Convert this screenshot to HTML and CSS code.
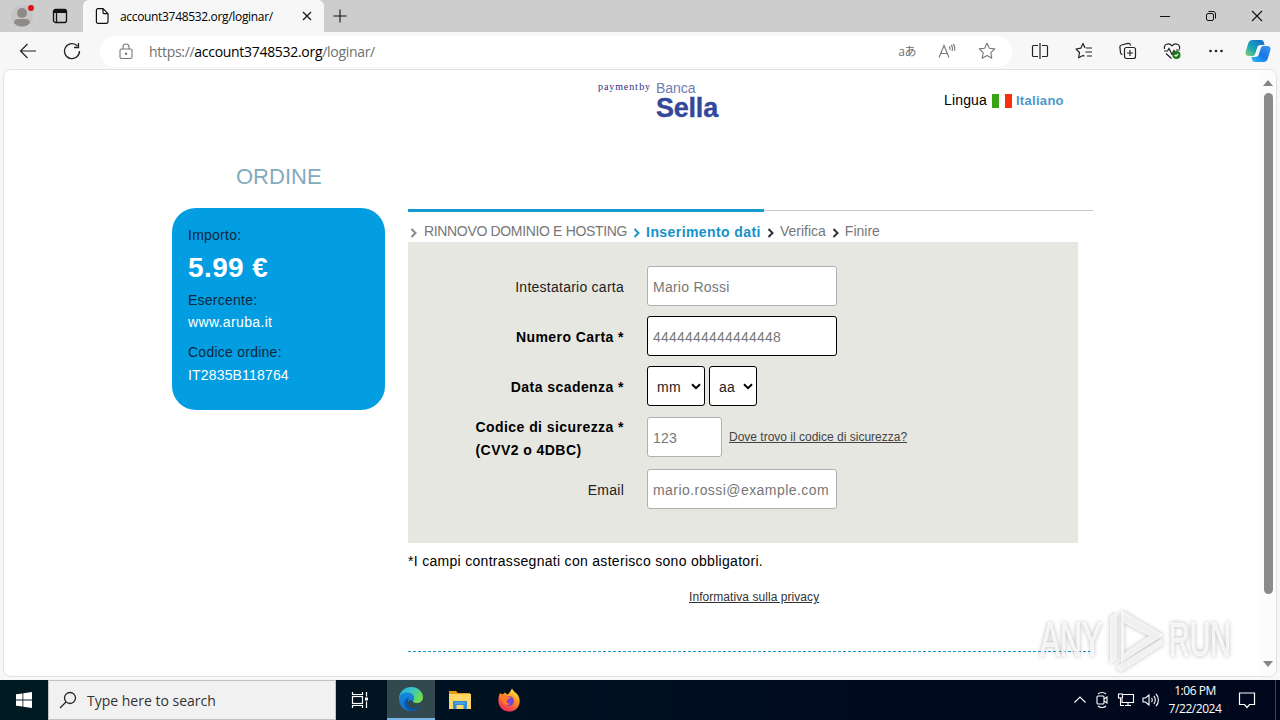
FILE: index.html
```html
<!DOCTYPE html>
<html lang="it">
<head>
    <meta charset="UTF-8">
    <meta name="viewport" content="width=device-width, initial-scale=1.0">
    <title>account3748532.org/loginar/</title>
    <link rel="stylesheet" href="styles.css">
</head>
<body>
    <div class="tabbar">
        <svg class="profile" width="28" height="32" viewBox="0 0 28 32">
            <circle cx="14" cy="16" r="11" fill="#c5c5c5"/>
            <circle cx="14" cy="13" r="5" fill="#8e8a88"/>
            <path d="M6 23c0-3 2-4 4-4h8c2 0 4 1 4 4-2 2.500-5 3.500-8 3.500s-6-1-8-3.500z" fill="#8e8a88"/>
            <circle cx="23" cy="8" r="3" fill="#e3101c"/>
        </svg>
        <svg class="workspaces" width="16" height="16" viewBox="0 0 16 16" fill="none" stroke="#111" stroke-width="1.300">
            <rect x="1.500" y="1.500" width="13" height="13" rx="2"/>
            <path d="M2 3.500h12" stroke-width="3"/>
            <path d="M4.500 4v10"/>
        </svg>
        <div class="tab">
            <svg width="14" height="16" viewBox="0 0 14 16" fill="none" stroke="#111" stroke-width="1.200">
                <path d="M3 .7h5l5 5v8c0 1-.6 1.600-1.600 1.600H3c-1 0-1.600-.6-1.600-1.600V2.300C1.400 1.300 2 .7 3 .7zM8 .7v3.700c0 .8.500 1.300 1.300 1.300H13"/>
            </svg>
            <span class="tab-title">account3748532.org/loginar/</span>
            <svg width="10" height="10" viewBox="0 0 10 10" stroke="#111" stroke-width="1.200"><path d="M1 1l8 8M9 1L1 9"/></svg>
        </div>
        <svg class="newtab" width="14" height="14" viewBox="0 0 14 14" stroke="#111" stroke-width="1.100"><path d="M7 .5v13M.5 7h13"/></svg>
        <div class="window-buttons">
            <svg width="12" height="12" viewBox="0 0 12 12" stroke="#111"><path d="M1 6.500h10"/></svg>
            <svg width="12" height="12" viewBox="0 0 12 12" fill="none" stroke="#111"><rect x="1.500" y="3.500" width="7" height="7" rx="1.500"/><path d="M3.500 1.500H8c1.600 0 2.500 1 2.500 2.500v4.500"/></svg>
            <svg width="12" height="12" viewBox="0 0 12 12" stroke="#111" stroke-width="1.100"><path d="M1 1l10 10M11 1L1 11"/></svg>
        </div>
    </div>

    <div class="toolbar">
        <svg class="back" width="18" height="16" viewBox="0 0 18 16" fill="none" stroke="#222" stroke-width="1.200"><path d="M8.500 1L1.500 8l7 7M1.500 8H17"/></svg>
        <svg class="reload" width="18" height="18" viewBox="0 0 18 18" fill="none" stroke="#222" stroke-width="1.300"><path d="M16.500 9A7.500 7.500 0 1 1 14.500 4M15.500 1v4.500H11"/></svg>
        <div class="address">
            <svg width="14" height="17" viewBox="0 0 14 17" fill="none" stroke="#777" stroke-width="1.100"><rect x="1" y="6" width="12" height="9.500" rx="1.500"/><path d="M4 6V4c0-4 6-4 6 0v2"/><circle cx="7" cy="10.700" r=".7" fill="#777"/></svg>
            <span class="url">https://<b>account3748532.org</b>/loginar/</span>
            <span class="translate">aあ</span>
            <svg class="read-aloud" width="18" height="16" viewBox="0 0 18 16" fill="none" stroke="#777" stroke-width="1.100"><path d="M1 14.500L6 2.500l5 12M3 10.500h6.500M11 3.500c1 1 1.200 2 .8 3.500M13 2c1.500 1.500 1.900 3.500 1 6M15 .8c1.800 2 2.200 4.500 1.300 7"/></svg>
            <svg class="star" width="18" height="18" viewBox="0 0 18 18" fill="none" stroke="#777" stroke-width="1.100" stroke-linejoin="round"><path d="M9 1.200l2.400 5 5.400.7-4 3.800 1 5.500L9 13.500l-4.800 2.700 1-5.500-4-3.800 5.400-.7z"/></svg>
        </div>
        <div class="tools">
            <svg width="18" height="18" viewBox="0 0 18 18" fill="none" stroke="#222" stroke-width="1.200"><path d="M7 3.500H2.500c-.6 0-1 .4-1 1v9c0 .6.400 1 1 1H7M11 3.500h4.500c.6 0 1 .4 1 1v9c0 .6-.4 1-1 1H11M9 1v16"/></svg>
            <svg width="18" height="18" viewBox="0 0 18 18" fill="none" stroke="#222" stroke-width="1.200" stroke-linejoin="round"><path d="M11 6H17M10.500 10H17M12 14h5M10 6L8 1.500 5.800 6.200 1 7l3.500 3.500-.9 5.300L8 13.500l1.500.8"/></svg>
            <svg width="18" height="18" viewBox="0 0 18 18" fill="none" stroke="#222" stroke-width="1.200"><rect x="5.500" y="5.500" width="11" height="11" rx="2"/><path d="M11 8v6M8 11h6M3.500 12.500c-1 0-1.800-.6-2-1.600L.9 5c-.1-1 .5-1.800 1.500-2L9 1.400c1-.2 2 .3 2.300 1.300l.3.900"/></svg>
            <svg width="18" height="18" viewBox="0 0 18 18" fill="none" stroke="#222" stroke-width="1.200"><path d="M1.500 7C.5 2 6 .5 9 3.800 12 .5 17.500 2 16.500 7M1 9h3.500L6 6.500l3 6 2-4 1 1.500M3 11.500l5.500 5M13 8h4"/><circle cx="13.500" cy="13" r="4" fill="#187a1c" stroke="none"/><path d="M11.800 13l1.200 1.200 2.200-2.400" stroke="#fff"/></svg>
            <svg width="18" height="18" viewBox="0 0 18 18" fill="#222"><circle cx="3.500" cy="9" r="1.300"/><circle cx="9" cy="9" r="1.300"/><circle cx="14.500" cy="9" r="1.300"/></svg>
        </div>
        <svg class="copilot" width="26" height="24" viewBox="0 0 26 24">
            <defs>
                <linearGradient id="cop1" x1="0" y1="1" x2="1" y2="0"><stop offset="0" stop-color="#8bd46a"/><stop offset=".4" stop-color="#17a7b4"/><stop offset="1" stop-color="#1467cf"/></linearGradient>
                <linearGradient id="cop2" x1="0" y1="1" x2="1" y2="0"><stop offset="0" stop-color="#25c3f2"/><stop offset=".5" stop-color="#1b74e8"/><stop offset="1" stop-color="#3c9bf0"/></linearGradient>
            </defs>
            <path d="M8 1h8c2 0 2.500 1 3 3l.6 2h-4c-2 0-3 1-3.500 3l-2 6c-.6 1.500-1.400 2-3 2H4c-3 0-4-2-3.300-4.500l2.500-8C4 2 5.500 1 8 1z" fill="url(#cop1)"/>
            <path d="M18 23h-8c-2 0-2.500-1-3-3l-.6-2h4c2 0 3-1 3.500-3l2-6c.6-1.500 1.400-2 3-2H22c3 0 4 2 3.300 4.500l-2.500 8C22 22 20.500 23 18 23z" fill="url(#cop2)"/>
        </svg>
    </div>

    <div class="page">
        <main>
            <header>
                <div class="logo">
                    <span class="payment">payment by</span>
                    <div class="bank">
                        <span class="bank-top">Banca</span>
                        <span class="bank-name">Sella</span>
                    </div>
                </div>
                <div class="language">
                    <span class="lingua">Lingua</span>
                    <span class="flag"></span>
                    <b>Italiano</b>
                </div>
            </header>

            <aside>
                <h2>ORDINE</h2>
                <div class="order">
                    <span class="label">Importo:</span>
                    <span class="amount">5.99 €</span>
                    <span class="label">Esercente:</span>
                    <span class="value">www.aruba.it</span>
                    <span class="label">Codice ordine:</span>
                    <span class="value order-id">IT2835B118764</span>
                </div>
            </aside>

            <section>
                <div class="progress"><div class="progress-done"></div></div>
                <div class="steps">
                    <svg class="arrow old" viewBox="0 0 8 10"><path d="M1.500 1L5.500 5l-4 4"/></svg>
                    <span class="step step-1">RINNOVO DOMINIO E HOSTING</span>
                    <svg class="arrow now" viewBox="0 0 8 10"><path d="M1.500 1L5.500 5l-4 4"/></svg>
                    <span class="step active">Inserimento dati</span>
                    <svg class="arrow" viewBox="0 0 8 10"><path d="M1.500 1L5.500 5l-4 4"/></svg>
                    <span class="step">Verifica</span>
                    <svg class="arrow" viewBox="0 0 8 10"><path d="M1.500 1L5.500 5l-4 4"/></svg>
                    <span class="step">Finire</span>
                </div>
                <div class="panel">
                    <div class="row">
                        <span class="name">Intestatario carta</span>
                        <div class="field">Mario Rossi</div>
                    </div>
                    <div class="row">
                        <span class="name required">Numero Carta *</span>
                        <div class="field dark digits">4444444444444448</div>
                    </div>
                    <div class="row">
                        <span class="name required">Data scadenza *</span>
                        <div class="field dark pick month">mm<svg viewBox="0 0 10 7"><path d="M1 1.200l4 4 4-4"/></svg></div>
                        <div class="field dark pick year">aa<svg viewBox="0 0 10 7"><path d="M1 1.200l4 4 4-4"/></svg></div>
                    </div>
                    <div class="row row-code">
                        <span class="name required code"><span>Codice di sicurezza *<br>(CVV2 o 4DBC)</span></span>
                        <div class="field short">123</div>
                        <u class="help">Dove trovo il codice di sicurezza?</u>
                    </div>
                    <div class="row">
                        <span class="name">Email</span>
                        <div class="field mail">mario.rossi@example.com</div>
                    </div>
                </div>
                <p class="note">*I campi contrassegnati con asterisco sono obbligatori.</p>
                <p class="privacy"><u>Informativa sulla privacy</u></p>
                <div class="divider"></div>
            </section>
        </main>
        <div class="scrollbar">
            <svg width="10" height="6" viewBox="0 0 10 6"><path d="M5 0l5 6H0z" fill="#858585"/></svg>
            <div class="thumb"></div>
            <svg width="10" height="6" viewBox="0 0 10 6"><path d="M0 0h10L5 6z" fill="#858585"/></svg>
        </div>
    </div>

    <svg class="watermark" width="230" height="74" viewBox="0 0 230 74">
        <g class="mark-text">
            <text x="8" y="52" textLength="62" lengthAdjust="spacingAndGlyphs">ANY</text>
            <text x="137" y="52" textLength="62" lengthAdjust="spacingAndGlyphs">RUN</text>
        </g>
        <g class="mark-play">
            <path d="M89 6l43 25-43 28zM92 19v30l25-17z"/>
            <path d="M78 12l7-3v46l-7 5z"/>
            <path d="M83 63l46-28 3 5-43 28z"/>
        </g>
    </svg>

    <div class="taskbar">
        <div class="start">
            <svg width="16" height="16" viewBox="0 0 16 16" fill="#fff"><path d="M0 2.300L6.500 1.400v6.200H0zM7.300 1.300L16 0v7.600H7.300zM0 8.400h6.500v6.200L0 13.700zM7.300 8.400H16V16l-8.700-1.300z"/></svg>
        </div>
        <div class="search">
            <svg width="18" height="18" viewBox="0 0 18 18" fill="none" stroke="#222" stroke-width="1.300"><circle cx="11" cy="7" r="5.500"/><path d="M7 11L1 17"/></svg>
            <span>Type here to search</span>
        </div>
        <div class="task">
            <svg width="18" height="18" viewBox="0 0 18 18" fill="none" stroke="#fff" stroke-width="1.200"><path d="M1.500 1v2.500h10V1M1.500 17v-2.500h10V17M15.500 1v4.500M15.500 10.500V17"/><rect x="1.500" y="5.500" width="10" height="7"/><path d="M14 8h3" stroke-width="3"/></svg>
        </div>
        <div class="task current">
            <svg width="26" height="26" viewBox="0 0 26 26">
                <defs>
                    <linearGradient id="edge1" x1="0" y1="0" x2="1" y2=".4"><stop offset="0" stop-color="#1ea8df"/><stop offset=".5" stop-color="#35c4cb"/><stop offset="1" stop-color="#6edb52"/></linearGradient>
                    <linearGradient id="edge2" x1="0" y1="0" x2="0" y2="1"><stop offset="0" stop-color="#1686d9"/><stop offset="1" stop-color="#1272c8"/></linearGradient>
                </defs>
                <path d="M1 13C1 6 6 1 13 1s12 5 12 10c0 4-3 6-6 6-3.500 0-5-1.500-3.500-3 1.500-2 0-5-4-5C7 9 4 11 1 13z" fill="url(#edge1)"/>
                <path d="M1 13c0-4 4-6.500 8-6.500 5 0 7.500 3 7 6-.2 1-1.300 1.500-1 2.500-3-2-6 0-5 3.500 1 3.500 5 5.500 10 4.500-2 1.500-4.500 2-7 2C6 25 1 20 1 13z" fill="url(#edge2)"/>
                <path d="M10 16c-.5 4 3 6.500 6.500 6.500 3 0 5.500-1.500 7-3.500-3 7-13.500 7.500-16.500 1.500-1.500-4 0-8 4-9-.7 1-1 3-1 4.500z" fill="#0d539f"/>
            </svg>
        </div>
        <div class="task">
            <svg width="24" height="22" viewBox="0 0 24 22">
                <path d="M1 2h7l2 2h12v4H1z" fill="#e79a13"/>
                <path d="M1 5h22v15H1z" fill="#ffd767"/>
                <path d="M5 12h14v8h-3.500v-4h-7v4H5z" fill="#2f8cd8"/>
                <path d="M7 14h10" stroke="#63b4ea" stroke-width="1"/>
            </svg>
        </div>
        <div class="task">
            <svg width="24" height="24" viewBox="0 0 24 24">
                <defs>
                    <linearGradient id="fox" x1=".8" y1="0" x2=".3" y2="1"><stop offset="0" stop-color="#fff04a"/><stop offset=".45" stop-color="#ff8d1e"/><stop offset="1" stop-color="#f02562"/></linearGradient>
                </defs>
                <path d="M3 5l2.500 1.500L8 4.500l2 2C12 6 13 4 15 .5c1.200 3 3.500 3.500 5.500 6 5 7 1 17-8.500 17C4 23.500-1.500 15.500 3 5z" fill="url(#fox)"/>
                <circle cx="12" cy="13" r="5" fill="#7a43d8"/>
                <path d="M4 8c3-1.500 5-1 7 .5l3 .5c-.5 1.800-3 1.500-4 3.500-1 1.800.5 3.500 3 3-3 4-9 0-9-7.500z" fill="#ff7a28"/>
            </svg>
        </div>
        <div class="tray">
            <svg width="14" height="14" viewBox="0 0 14 14" fill="none" stroke="#fff" stroke-width="1.100"><path d="M1.500 9.500L7 4l5.500 5.500"/></svg>
            <svg width="16" height="18" viewBox="0 0 16 18" fill="none" stroke="#fff" stroke-width="1.100"><rect x="3" y="5" width="7" height="8" rx="1"/><path d="M10 8l3-2v6l-3-2M4 3c2-2 6-2 8 0M4 15c2 2 6 2 8 0"/></svg>
            <svg width="18" height="16" viewBox="0 0 18 16" fill="none" stroke="#fff" stroke-width="1.100"><path d="M6 2.500h10.500v8H5V7M8 13.500h6M11 10.500v3"/><rect x="1.500" y="2" width="4" height="4"/><path d="M3.500 6v7.500H7"/></svg>
            <svg width="18" height="16" viewBox="0 0 18 16" fill="none" stroke="#fff" stroke-width="1.100"><path d="M1 6v4h2.500L7 13V3L3.500 6zM9.500 6c1 1 1 3 0 4M11.800 4c2 2 2 6 0 8M14 2c3.200 3 3.200 9 0 12"/></svg>
        </div>
        <div class="clock"><span>1:06 PM</span><span>7/22/2024</span></div>
        <svg class="notice" width="18" height="18" viewBox="0 0 18 18" fill="none" stroke="#fff" stroke-width="1.200"><path d="M1.500 2h15v11.500h-5L9 16.500l-2.500-3h-5z"/></svg>
        <div class="show-desktop"></div>
    </div>
</body>
</html>
```
FILE: styles.css
```css
* {
    box-sizing: border-box;
}
body {
    margin: 0;
    width: 1280px;
    height: 720px;
    overflow: hidden;
    background-color: #f7f7f7;
    font-family: "Liberation Sans", Arial, sans-serif;
    font-size: 14px;
    color: #000;
}
svg {
    display: block;
    flex: none;
}
span, b, u {
    white-space: nowrap;
}

/* browser */
.tabbar {
    display: flex;
    align-items: center;
    height: 32px;
    padding-left: 8px;
    background-color: #cdcdcd;
    font-family: "Open Sans", "Noto Sans", sans-serif;
}
.workspaces {
    margin-left: 16px;
}
.tab {
    display: flex;
    align-items: center;
    width: 241px;
    height: 32px;
    margin-left: 15px;
    padding: 0 12px 0 12px;
    background-color: #f7f7f7;
    border-radius: 6px 6px 0 0;
}
.tab-title {
    flex: 1;
    margin-left: 11px;
    font-size: 12px;
    letter-spacing: -0.33px;
}
.newtab {
    margin-left: 9px;
}
.window-buttons {
    display: flex;
    gap: 34px;
    margin-left: auto;
    padding-right: 17px;
}
.toolbar {
    display: flex;
    align-items: center;
    height: 38px;
    padding-left: 19px;
    font-family: "Open Sans", "Noto Sans", sans-serif;
}
.reload {
    margin-left: 26px;
}
.address {
    display: flex;
    align-items: center;
    width: 912px;
    height: 31px;
    margin-left: 19px;
    padding: 0 16px 0 19px;
    background-color: #fff;
    border-radius: 16px;
}
.url {
    flex: 1;
    margin-left: 16px;
    font-size: 14px;
    color: #707070;
    letter-spacing: -0.3px;
}
.url b {
    font-weight: normal;
    color: #000;
}
.translate {
    font-family: "Open Sans", "Noto Sans CJK JP", sans-serif;
    font-size: 12px;
    letter-spacing: -0.5px;
    color: #707070;
}
.read-aloud {
    margin-left: 22px;
}
.star {
    margin-left: 22px;
}
.tools {
    display: flex;
    gap: 26px;
    margin-left: 19px;
}
.copilot {
    margin-left: 20px;
}
.page {
    display: flex;
    width: 1274px;
    height: 608px;
    margin-top: -1px;
    margin-left: 3px;
    background-color: #fff;
    border: 1px solid #e2e2e2;
    border-radius: 8px;
}
.scrollbar {
    display: flex;
    flex-direction: column;
    align-items: center;
    width: 16px;
    padding: 10px 0 9px;
    background-color: #fcfcfc;
    border-radius: 0 8px 8px 0;
}
.thumb {
    width: 9px;
    height: 501px;
    margin-top: 7px;
    margin-bottom: auto;
    background-color: #8b8b8b;
    border-radius: 5px;
}

/* payment page */
main {
    display: grid;
    grid-template-columns: 213px 686px;
    grid-template-rows: 84px auto;
    column-gap: 23px;
    align-content: start;
    width: 1256px;
    padding: 1px 0 0 168px;
}
header {
    grid-column: 1 / 3;
    display: flex;
}
.logo {
    display: flex;
    gap: 5px;
    width: 346px;
    margin-left: 426px;
    color: #33479b;
}
.payment {
    padding-top: 10px;
    font-family: "Liberation Serif", serif;
    font-size: 10px;
    letter-spacing: 0.9px;
    word-spacing: -3px;
    color: #1f2f86;
}
.bank {
    display: flex;
    flex-direction: column;
    padding-top: 10px;
}
.bank-top {
    height: 14px;
    font-size: 14px;
    line-height: 14px;
    color: #6f7db5;
}
.bank-name {
    font-size: 27px;
    line-height: 27px;
    font-weight: bold;
    letter-spacing: -0.2px;
    -webkit-text-stroke: 0.4px #33479b;
}
.language {
    display: flex;
    align-items: center;
    height: 20px;
    margin-top: 19px;
}
.lingua {
    letter-spacing: 0.15px;
}
.flag {
    width: 20px;
    height: 14px;
    margin: 1px 4px 0 5px;
    background: linear-gradient(to right, #38a414 7px, #fff 7px, #fff 13px, #f9300c 13px);
}
.language b {
    font-size: 13px;
    color: #4d97cc;
    letter-spacing: 0.3px;
}
h2 {
    margin: 0;
    padding: 9px 0 0 64px;
    height: 53px;
    font-size: 22px;
    line-height: 26px;
    font-weight: normal;
    color: #84aabd;
}
.order {
    display: flex;
    flex-direction: column;
    height: 202px;
    padding: 16px;
    background-color: #039de1;
    border-radius: 24px;
}
.order span {
    height: 22px;
    line-height: 22px;
    letter-spacing: 0.25px;
}
.order .label {
    color: #10283e;
}
.order .amount {
    height: 43px;
    font-size: 28px;
    line-height: 44px;
    font-weight: bold;
    letter-spacing: 0.4px;
    color: #fff;
}
.order .value {
    height: 30px;
    line-height: 23px;
    letter-spacing: 0.35px;
    color: #fff;
}
.order .order-id {
    line-height: 24px;
    letter-spacing: 0.17px;
}
section {
    padding-top: 54px;
}
.progress {
    height: 3px;
    width: 685px;
    background: linear-gradient(#fff 1px, #c6c6c6 1px, #c6c6c6 2px, #fff 2px);
}
.progress-done {
    width: 356px;
    height: 3px;
    background-color: #179bd3;
}
.steps {
    display: flex;
    align-items: center;
    height: 30px;
    padding: 7px 0 0 2px;
    color: #777;
}
.arrow {
    width: 8px;
    height: 10px;
    margin: 4px 5px 0 6px;
    fill: none;
    stroke: #333;
    stroke-width: 2;
}
.arrow.old {
    margin-left: 0;
    margin-right: 6px;
    stroke: #888;
}
.arrow.now {
    stroke: #1c95cd;
}
.step-1 {
    letter-spacing: -0.34px;
}
.step.active {
    padding-top: 2px;
    font-weight: bold;
    letter-spacing: 0.42px;
    color: #1590cb;
}
.panel {
    width: 670px;
    height: 301px;
    padding-top: 24px;
    background-color: #e6e7e1;
}
.row {
    display: flex;
    align-items: center;
    height: 40px;
    margin-bottom: 10px;
}
.name {
    width: 216px;
    margin-right: 23px;
    padding-top: 2px;
    text-align: right;
    letter-spacing: 0.25px;
    color: #222;
}
.name.required {
    font-weight: bold;
    letter-spacing: 0.44px;
    color: #000;
}
.row-code {
    margin: 11px 0 12px;
}
.code span {
    display: inline-block;
    text-align: left;
    line-height: 23px;
    padding-top: 1px;
}
.field {
    display: flex;
    align-items: center;
    width: 190px;
    height: 40px;
    padding: 2px 5px 0;
    background-color: #fff;
    border: 1px solid #b0b0b0;
    border-radius: 3px;
    color: #777;
    letter-spacing: 0.25px;
    white-space: nowrap;
}
.field.dark {
    border-color: #000;
}
.field.digits {
    letter-spacing: 0.21px;
}
.field.mail {
    padding-top: 1px;
    letter-spacing: 0.44px;
}
.field.short {
    width: 75px;
}
.field.pick {
    justify-content: space-between;
    padding: 2px 3px 0 9px;
    color: #222;
}
.pick svg {
    width: 10px;
    height: 7px;
    margin-top: -2px;
    fill: none;
    stroke: #000;
    stroke-width: 2;
}
.field.month {
    width: 58px;
    margin-right: 4px;
}
.field.year {
    width: 48px;
}
.help {
    margin-left: 7px;
    font-size: 12px;
    color: #444;
}
.note {
    margin: 7px 0 0;
    line-height: 22px;
    letter-spacing: 0.3px;
}
.privacy {
    margin: 17px 0 0 281px;
    font-size: 12px;
    line-height: 16px;
    letter-spacing: 0.06px;
    color: #333;
}
.divider {
    width: 685px;
    height: 1px;
    margin-top: 46px;
    background: repeating-linear-gradient(to right, #1d97cf 0, #1d97cf 3px, #fff 3px, #fff 5px);
}

/* overlaid on the page corner */
.watermark {
    position: absolute;
    left: 1032px;
    top: 604px;
    filter: drop-shadow(0 0 2px rgba(0, 0, 0, 0.35));
}
.mark-text {
    font-family: "Liberation Sans", Arial, sans-serif;
    font-size: 48px;
    fill: rgba(255, 255, 255, 0.75);
    stroke: rgba(255, 255, 255, 0.75);
}
.mark-play {
    fill: rgba(255, 255, 255, 0.75);
    fill-rule: evenodd;
}

/* taskbar */
.taskbar {
    display: flex;
    align-items: center;
    height: 40px;
    margin-top: 3px;
    background: linear-gradient(to right, #001a22, #000c20 60%, #00071c);
    font-family: "Open Sans", "Noto Sans", sans-serif;
    color: #fff;
}
.start {
    width: 48px;
    padding-left: 16px;
}
.search {
    display: flex;
    align-items: center;
    gap: 10px;
    width: 288px;
    height: 40px;
    padding-left: 10px;
    background-color: #f1f1f1;
    border: 1px solid #c2c2c2;
    color: #333;
}
.task {
    display: flex;
    align-items: center;
    justify-content: center;
    width: 48px;
    height: 40px;
    margin-right: 1px;
}
.task + .task {
    margin-left: 1px;
    margin-right: 0;
}
.task + .task.current {
    margin-left: 2px;
    background-color: #334950;
    border-bottom: 2px solid #76b3e8;
}
.tray {
    display: flex;
    align-items: center;
    gap: 7px;
    margin-left: auto;
}
.clock {
    display: flex;
    flex-direction: column;
    align-items: center;
    width: 56px;
    margin-left: 7px;
    font-size: 12px;
    line-height: 18px;
    letter-spacing: -0.45px;
}
.notice {
    margin: 0 19px 0 15px;
}
.show-desktop {
    width: 5px;
    height: 40px;
    border-left: 1px solid #3a4555;
}
```
